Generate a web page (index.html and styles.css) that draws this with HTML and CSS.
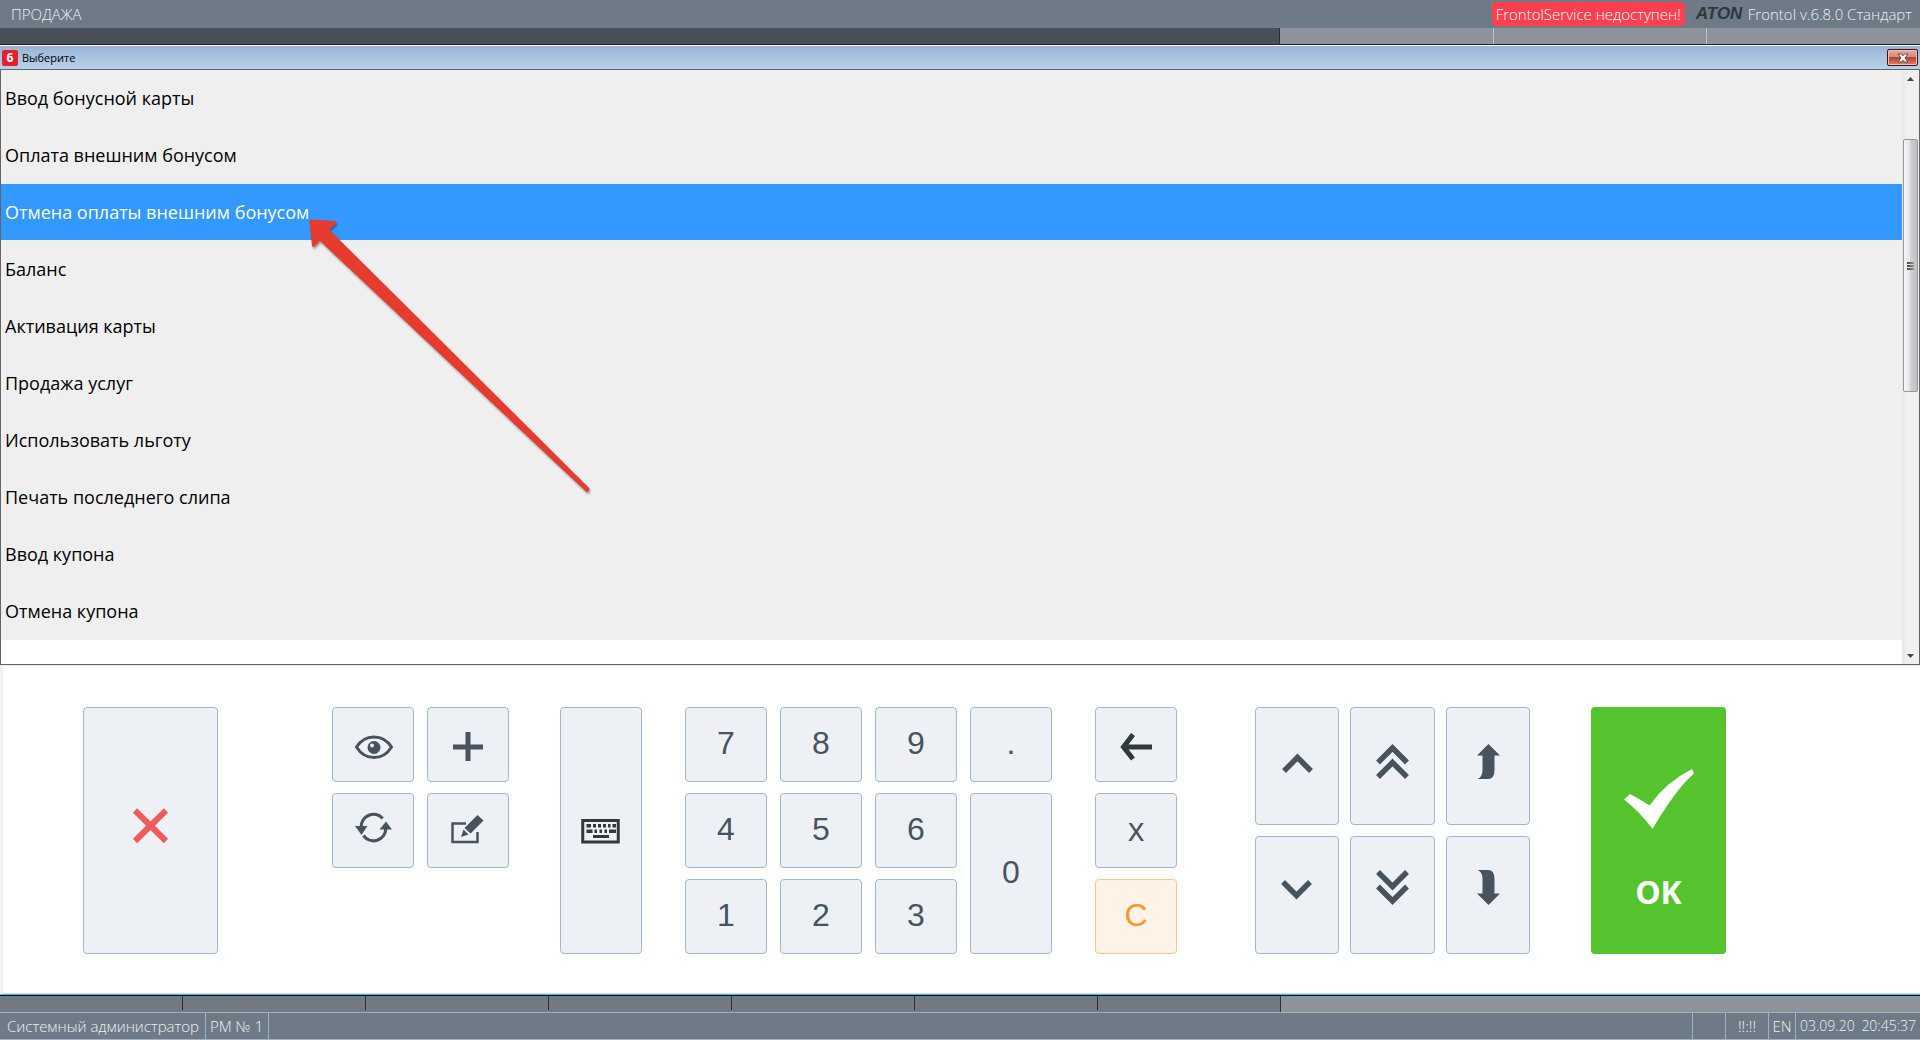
FILE: index.html
```html
<!DOCTYPE html>
<html lang="ru">
<head>
<meta charset="utf-8">
<title>Frontol</title>
<link rel="stylesheet" href="styles.css">
</head>
<body>
<header class="topbar">
  <h1 class="mode">ПРОДАЖА</h1>
  <span class="alert">FrontolService недоступен!</span>
  <span class="brand">ATON</span>
  <span class="version">Frontol v.6.8.0 Стандарт</span>
</header>
<div class="strip strip-top"><i class="wide"></i><i></i><i></i><i></i></div>

<section class="window" aria-label="Выберите">
  <div class="titlebar">
    <span class="app-icon">6</span>
    <h2 class="window-title">Выберите</h2>
    <button class="close" aria-label="Закрыть">
      <svg width="12" height="10" viewBox="0 0 12 10"><path d="M1 1h3.5L6 2.8 7.500 1H11L8 5l3 4H7.500L6 7.200 4.500 9H1l3-4z" fill="#fff" stroke="#51505c"/></svg>
    </button>
  </div>
  <div class="window-body">
    <ul class="list" role="listbox">
      <li role="option">Ввод бонусной карты</li>
      <li role="option">Оплата внешним бонусом</li>
      <li role="option" class="selected" aria-selected="true">Отмена оплаты внешним бонусом</li>
      <li role="option">Баланс</li>
      <li role="option">Активация карты</li>
      <li role="option">Продажа услуг</li>
      <li role="option">Использовать льготу</li>
      <li role="option">Печать последнего слипа</li>
      <li role="option">Ввод купона</li>
      <li role="option">Отмена купона</li>
    </ul>
    <div class="scrollbar">
      <button class="scroll-step" aria-label="Вверх"><svg width="7" height="4"><path d="M0 4L3.500 0 7 4z" fill="#444"/></svg></button>
      <div class="scroll-track"><div class="thumb"><i></i><i></i><i></i></div></div>
      <button class="scroll-step" aria-label="Вниз"><svg width="7" height="4"><path d="M0 0h7L3.500 4z" fill="#444"/></svg></button>
    </div>
    <svg class="pointer" width="290" height="280" viewBox="0 0 290 280">
      <path d="M2 2L26 3.500 18 10.500 279 270 278 271.500 11 20 4.500 26.500z" fill="#e63c30" stroke="#e63c30" stroke-width="3" stroke-linejoin="round"/>
    </svg>
  </div>
</section>

<main class="panel">
  <button class="key cancel" aria-label="Отмена"><svg width="41" height="41"><path d="M5 5.500L36 36M36 5.500L5 36" stroke="#f25b5b" stroke-width="6"/></svg></button>

  <div class="tools">
    <button class="key" aria-label="Просмотр"><svg width="40" height="41"><path d="M3.500 23C12 9.500 30 9.500 38.500 23 30 37 12 37 3.500 23z" fill="none" stroke="#47545f" stroke-width="3"/><circle cx="21" cy="23.500" r="6.500" fill="#47545f"/><circle cx="19" cy="21.500" r="2" fill="#edf1f5"/></svg></button>
    <button class="key" aria-label="Добавить"><svg width="40" height="41"><path d="M20 8v29M5 23h30" stroke="#47545f" stroke-width="5"/></svg></button>
    <button class="key" aria-label="Обновить"><svg width="40" height="41"><g fill="none" stroke="#47545f" stroke-width="3.200"><path d="M8.200 17.500A12.300 12.600 0 0 1 29.600 8.500"/><path d="M32.800 18.500A12.300 12.600 0 0 1 10.500 25.500"/></g><path d="M2 16h12.500L8.500 25zM26.500 19.500H39L33 11.500z" fill="#47545f"/></svg></button>
    <button class="key" aria-label="Изменить"><svg width="40" height="41"><path d="M18 13.500H4.500V32H29.500V22" fill="none" stroke="#47545f" stroke-width="2.500"/><path d="M29.500 5L35.500 10.500 22.500 23.500 16.500 18zM15.500 19.500L20.500 24.500 13 27z" fill="#47545f"/></svg></button>
  </div>

  <button class="key keyboard" aria-label="Клавиатура"><svg width="40" height="41"><path d="M1.750 10.500h35.500v21.500h-35.500z" fill="none" stroke="#30393c" stroke-width="3"/><path d="M5.500 14h4.500v3.500H5.500zM12 14h3v3.500h-3zM17 14h3v3.500h-3zM22 14h3v3.500h-3zM27 14h2.500v3.500H27zM31.500 14H35v3.500h-3.500zM5.500 19.500h6V23h-6zM13.500 19.500h2.500V23h-2.500zM18.500 19.500H21V23h-2.500zM23.500 19.500H26V23h-2.500zM28 19.500h7V23h-7zM12 25h16v3H12z" fill="#30393c"/></svg></button>

  <div class="digits">
    <button class="key">7</button>
    <button class="key">8</button>
    <button class="key">9</button>
    <button class="key">.</button>
    <button class="key">4</button>
    <button class="key">5</button>
    <button class="key">6</button>
    <button class="key zero">0</button>
    <button class="key">1</button>
    <button class="key">2</button>
    <button class="key">3</button>
  </div>

  <div class="edit">
    <button class="key" aria-label="Стереть"><svg width="40" height="41"><path d="M17 10.500L7.500 23 17 35M7 23H36" fill="none" stroke="#30393c" stroke-width="5"/></svg></button>
    <button class="key multiply">x</button>
    <button class="key clear">C</button>
  </div>

  <div class="nav">
    <button class="key up" aria-label="Строка вверх"><svg width="40" height="40"><path d="M7 29L20.500 15.500 34 29" fill="none" stroke="#47545f" stroke-width="5.500"/></svg></button>
    <button class="key up" aria-label="Страница вверх"><svg width="40" height="40"><path d="M6 20.500L20.500 6 35 20.500M6 35L20.500 20.500 35 35" fill="none" stroke="#47545f" stroke-width="5.500"/></svg></button>
    <button class="key up" aria-label="В начало"><svg width="40" height="40"><path d="M20.500 2L32 13.500H26.500V28Q26.500 37 20 37H9.500Q14.500 35 14.500 28V13.500H9z" fill="#47545f"/></svg></button>
    <button class="key down" aria-label="Строка вниз"><svg width="40" height="40"><path d="M6 15L19.500 28.500 33 15" fill="none" stroke="#47545f" stroke-width="5.500"/></svg></button>
    <button class="key down" aria-label="Страница вниз"><svg width="40" height="40"><path d="M6 5L20.500 19.500 35 5M6 19.500L20.500 34 35 19.500" fill="none" stroke="#47545f" stroke-width="5.500"/></svg></button>
    <button class="key down" aria-label="В конец"><svg width="40" height="40"><path d="M20.500 38L32 26.500H26.500V12Q26.500 3 20 3H9.500Q14.500 5 14.500 12V26.500H9z" fill="#47545f"/></svg></button>
  </div>

  <button class="ok"><svg width="70" height="60"><path d="M0 30.500L6 25Q16 30 25.500 36.500 42 13 68 0L70 4.500Q52 20 28.500 60 16 43 0 30.500z" fill="#fff"/></svg>OK</button>
</main>

<div class="strip strip-bottom"><i></i><i></i><i></i><i></i><i></i><i></i><i></i><i class="rest"></i></div>
<footer class="status">
  <span class="user">Системный администратор</span>
  <span class="place">РМ № 1</span>
  <span class="fill"></span>
  <span class="blank"></span>
  <span class="signal">!!:!!</span>
  <span class="lang">EN</span>
  <span class="clock"><time>03.09.20</time><time>20:45:37</time></span>
</footer>
</body>
</html>
```
FILE: styles.css
```css
* { box-sizing: border-box; }

body {
  margin: 0;
  min-height: 100vh;
  display: flex;
  flex-direction: column;
  background: #fff;
  color: #000;
  font-family: "Open Sans", "Noto Sans", sans-serif;
}

svg { display: block; flex: none; }
button { font: inherit; padding: 0; margin: 0; cursor: pointer; }
h1, h2 { margin: 0; font: inherit; }

/* Header */
.topbar {
  display: flex;
  align-items: center;
  height: 28px;
  padding: 0 8px 0 11px;
  background: #6e7b87;
  color: #eceff2;
  font-size: 15px;
  font-weight: 300;
  line-height: 24px;
}
.mode { flex: 1; }
.alert {
  padding: 0 4px;
  border-radius: 4px;
  background: #ff4050;
  color: #fff;
}
.brand {
  width: 50px;
  margin: 0 2px 0 11px;
  color: #2c383d;
  font: italic bold 17px/24px "Liberation Sans", sans-serif;
}

/* Column strips behind the dialog */
.strip { display: flex; height: 17px; }
.strip i { flex: 213; }
.strip-top { background: #8e9299; border-bottom: 1px solid #222; }
.strip-top i + i { border-right: 1px solid #b9c3d0; }
.strip-top i:last-child { border-right: 0; }
.strip-top .wide { flex: 1281; background: #485158; border-right: 1px solid #262f34; }
.strip-bottom {
  border-top: 1px solid #000;
  background: #757981;
  box-shadow: 0 -1px #2ccbe4;
}
.strip-bottom i { flex: 183; margin-bottom: 2px; border-right: 1px solid #262f34; }
.strip-bottom i:nth-child(7) { margin-bottom: 0; }
.strip-bottom .rest { flex: 643; margin: 0; border: 0; background: #8e9299; }

/* Dialog window */
.window {
  display: flex;
  flex-direction: column;
  border-top: 1px solid #fff;
}
.titlebar {
  display: flex;
  align-items: center;
  height: 23px;
  padding: 0 2px;
  background: linear-gradient(#98b3d3, #a9c3e0 50%, #b7d2eb);
}
.app-icon {
  width: 16px;
  height: 16px;
  border-radius: 2px;
  background: #e4202b;
  color: #fff;
  font-size: 12px;
  font-weight: 700;
  line-height: 16px;
  text-align: center;
}
.window-title { flex: 1; padding-left: 4px; font-size: 11px; line-height: 22px; }
.close {
  display: flex;
  align-items: center;
  justify-content: center;
  width: 31px;
  height: 17px;
  border: 1px solid #43141e;
  border-radius: 2px;
  background: linear-gradient(#e9a799, #d98a7a 45%, #b8402a 50%, #d98571);
  box-shadow: inset 0 0 0 1px #f0c0b6;
}
.window-body {
  position: relative;
  display: flex;
  min-height: 596px;
  border: 1px solid #646464;
}
.list { flex: 1; margin: 0; padding: 0; list-style: none; }
.list li {
  height: 57px;
  padding-left: 4px;
  border-bottom: 1px solid #efefef;
  background: #efefef;
  font-size: 18px;
  line-height: 56px;
}
.list .selected { background: #3399ff; color: #fff; }

.scrollbar {
  display: flex;
  flex-direction: column;
  width: 17px;
  background: linear-gradient(90deg, #e6e6e6, #f0f0f0 30%);
}
.scroll-step {
  display: flex;
  align-items: center;
  justify-content: center;
  height: 17px;
  border: 0;
  background: none;
}
.scroll-track { flex: 1; padding-top: 52px; }
.thumb {
  display: flex;
  flex-direction: column;
  align-items: center;
  justify-content: center;
  gap: 1px;
  width: 15px;
  height: 253px;
  margin-left: 1px;
  border: 1px solid #979797;
  border-radius: 2px;
  background: linear-gradient(90deg, #f5f5f5, #e4e4e6 45%, #d0d0d3 50%, #c0c0c4);
}
.thumb i { width: 7px; height: 2px; background: linear-gradient(90deg, #444, #999); }

/* Annotation arrow over the list */
.pointer {
  position: absolute;
  left: 308px;
  top: 149px;
  filter: drop-shadow(1px 2px 1px rgba(0, 0, 0, 0.35));
}

/* Touch keypad */
.panel {
  flex: 1;
  display: grid;
  grid-template-columns:
    80fr 135fr 114fr 177fr 51fr 82fr 43fr 367fr 43fr 82fr 78fr 275fr 61fr 135fr 194fr;
  grid-template-rows: 247px;
  align-content: start;
  padding: 41px 0 39px;
  border-top: 1px solid #f0f0f0;
  border-left: 3px solid #f0f0f0;
  border-bottom: 2px solid #d5d9dd;
  background: #fff;
}
.key {
  display: flex;
  align-items: center;
  justify-content: center;
  border: 1px solid #a3b8c8;
  border-radius: 4px;
  background: #edf1f5;
  color: #47545f;
  font-family: "Liberation Sans", Arial, sans-serif;
  font-size: 32px;
  line-height: 36px;
}
.cancel { grid-column: 2; padding-bottom: 10px; }
.tools {
  grid-column: 4;
  display: grid;
  grid-template: repeat(3, 75px) / 1fr 1fr;
  gap: 11px 13px;
}
.keyboard { grid-column: 6; }
.digits {
  grid-column: 8;
  display: grid;
  grid-template: repeat(3, 75px) / repeat(4, 1fr);
  gap: 11px 13px;
}
.digits .key, .multiply, .clear { padding-bottom: 4px; }
.zero { grid-area: 2 / 4 / span 2; }
.edit {
  grid-column: 10;
  display: grid;
  grid-template-rows: repeat(3, 75px);
  gap: 11px;
}
.multiply { font-family: "Open Sans", sans-serif; }
.clear { border-color: #ffc58c; background: #fff3e8; color: #ff962d; }
.nav {
  grid-column: 12;
  display: grid;
  grid-template: repeat(2, 118px) / repeat(3, 1fr);
  gap: 11px;
}
.up { padding-bottom: 8px; }
.down { padding-bottom: 16px; }
.ok {
  grid-column: 14;
  display: flex;
  flex-direction: column;
  align-items: center;
  gap: 41px;
  padding-top: 62px;
  border: 0;
  border-radius: 4px;
  background: #55c32d;
  color: #fff;
  font-size: 32px;
  font-weight: 700;
  line-height: 44px;
}

/* Footer */
.status {
  display: flex;
  height: 28px;
  border-top: 1px solid #9eb2c3;
  border-bottom: 1px solid #9eb2c3;
  background: #6e7b87;
  color: #eceff2;
  font-size: 15px;
  font-weight: 300;
  line-height: 26px;
}
.status span { border-right: 1px solid #9eb2c3; white-space: nowrap; }
.user { width: 206px; padding-left: 7px; }
.place { width: 63px; padding-left: 4px; }
.fill { flex: 1; }
.blank { width: 33px; }
.signal { width: 43px; text-align: center; }
.lang { width: 27px; text-align: center; }
.status .clock {
  display: flex;
  justify-content: space-between;
  width: 124px;
  padding: 0 4px;
  border: 0;
  font-size: 14px;
}
```
